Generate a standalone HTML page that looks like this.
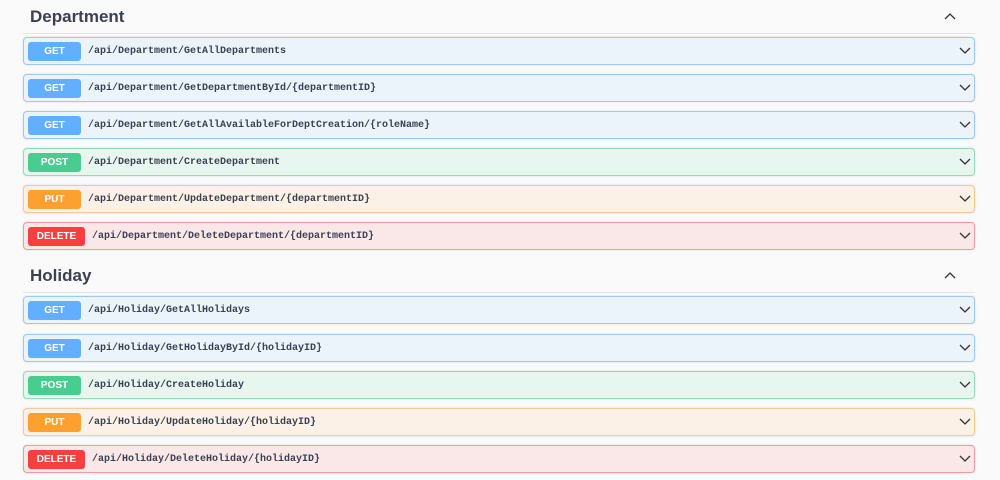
<!DOCTYPE html>
<html><head><style>
body{margin:0;width:1000px;height:480px;background:#fafafa;position:relative;overflow:hidden;font-family:"Liberation Sans",sans-serif}
.h{position:absolute;left:30px;font-size:17px;font-weight:bold;color:#3b4151}
.hl{position:absolute;left:23px;width:952px;height:1px;background:#e3e5e8}
.up{position:absolute;left:944px;width:12px;height:8px}
.r{position:absolute;left:23px;width:950px;height:26px;border:1px solid;border-radius:4px;box-shadow:0 0 2px rgba(0,0,0,.12)}
.b{position:absolute;left:4px;top:4px;height:19px;width:53px;border-radius:3px;color:#fff;font-weight:bold;font-size:10px;text-align:center;line-height:19px}
.p{position:absolute;left:64px;top:1px;line-height:25px;font-family:"Liberation Mono",monospace;font-weight:bold;font-size:10px;color:#3b4151}
.dn{position:absolute;right:3px;top:9px;width:12px;height:8px}
.g{background:#ebf3fb;border-color:#9ccaf5}.g .b{background:#61affe}
.po{background:#e8f6f0;border-color:#94dbb8}.po .b{background:#49cc90}
.pu{background:#fbf1e6;border-color:#f5c894}.pu .b{background:#fca130}
.d{background:#fae7e7;border-color:#f19a9a}.d .b{background:#f93e3e;width:57px}.d .p{left:68px}
</style></head><body>
<div class="h" style="top:7px">Department</div>
<svg class="up" style="top:12px" viewBox="0 0 12 8"><path d="M1 7L6 2L11 7" fill="none" stroke="#333" stroke-width="1.3"/></svg>
<div class="hl" style="top:33px"></div>
<div class="r g" style="top:37px"><div class="b">GET</div><div class="p">/api/Department/GetAllDepartments</div><svg class="dn" viewBox="0 0 12 8"><path d="M1 1L6 6L11 1" fill="none" stroke="#333" stroke-width="1.3"/></svg></div>
<div class="r g" style="top:74px"><div class="b">GET</div><div class="p">/api/Department/GetDepartmentById/{departmentID}</div><svg class="dn" viewBox="0 0 12 8"><path d="M1 1L6 6L11 1" fill="none" stroke="#333" stroke-width="1.3"/></svg></div>
<div class="r g" style="top:111px"><div class="b">GET</div><div class="p">/api/Department/GetAllAvailableForDeptCreation/{roleName}</div><svg class="dn" viewBox="0 0 12 8"><path d="M1 1L6 6L11 1" fill="none" stroke="#333" stroke-width="1.3"/></svg></div>
<div class="r po" style="top:148px"><div class="b">POST</div><div class="p">/api/Department/CreateDepartment</div><svg class="dn" viewBox="0 0 12 8"><path d="M1 1L6 6L11 1" fill="none" stroke="#333" stroke-width="1.3"/></svg></div>
<div class="r pu" style="top:185px"><div class="b">PUT</div><div class="p">/api/Department/UpdateDepartment/{departmentID}</div><svg class="dn" viewBox="0 0 12 8"><path d="M1 1L6 6L11 1" fill="none" stroke="#333" stroke-width="1.3"/></svg></div>
<div class="r d" style="top:222px"><div class="b">DELETE</div><div class="p">/api/Department/DeleteDepartment/{departmentID}</div><svg class="dn" viewBox="0 0 12 8"><path d="M1 1L6 6L11 1" fill="none" stroke="#333" stroke-width="1.3"/></svg></div>
<div class="h" style="top:266px">Holiday</div>
<svg class="up" style="top:271px" viewBox="0 0 12 8"><path d="M1 7L6 2L11 7" fill="none" stroke="#333" stroke-width="1.3"/></svg>
<div class="hl" style="top:292px"></div>
<div class="r g" style="top:296px"><div class="b">GET</div><div class="p">/api/Holiday/GetAllHolidays</div><svg class="dn" viewBox="0 0 12 8"><path d="M1 1L6 6L11 1" fill="none" stroke="#333" stroke-width="1.3"/></svg></div>
<div class="r g" style="top:334px"><div class="b">GET</div><div class="p">/api/Holiday/GetHolidayById/{holidayID}</div><svg class="dn" viewBox="0 0 12 8"><path d="M1 1L6 6L11 1" fill="none" stroke="#333" stroke-width="1.3"/></svg></div>
<div class="r po" style="top:371px"><div class="b">POST</div><div class="p">/api/Holiday/CreateHoliday</div><svg class="dn" viewBox="0 0 12 8"><path d="M1 1L6 6L11 1" fill="none" stroke="#333" stroke-width="1.3"/></svg></div>
<div class="r pu" style="top:408px"><div class="b">PUT</div><div class="p">/api/Holiday/UpdateHoliday/{holidayID}</div><svg class="dn" viewBox="0 0 12 8"><path d="M1 1L6 6L11 1" fill="none" stroke="#333" stroke-width="1.3"/></svg></div>
<div class="r d" style="top:445px"><div class="b">DELETE</div><div class="p">/api/Holiday/DeleteHoliday/{holidayID}</div><svg class="dn" viewBox="0 0 12 8"><path d="M1 1L6 6L11 1" fill="none" stroke="#333" stroke-width="1.3"/></svg></div>
</body></html>
